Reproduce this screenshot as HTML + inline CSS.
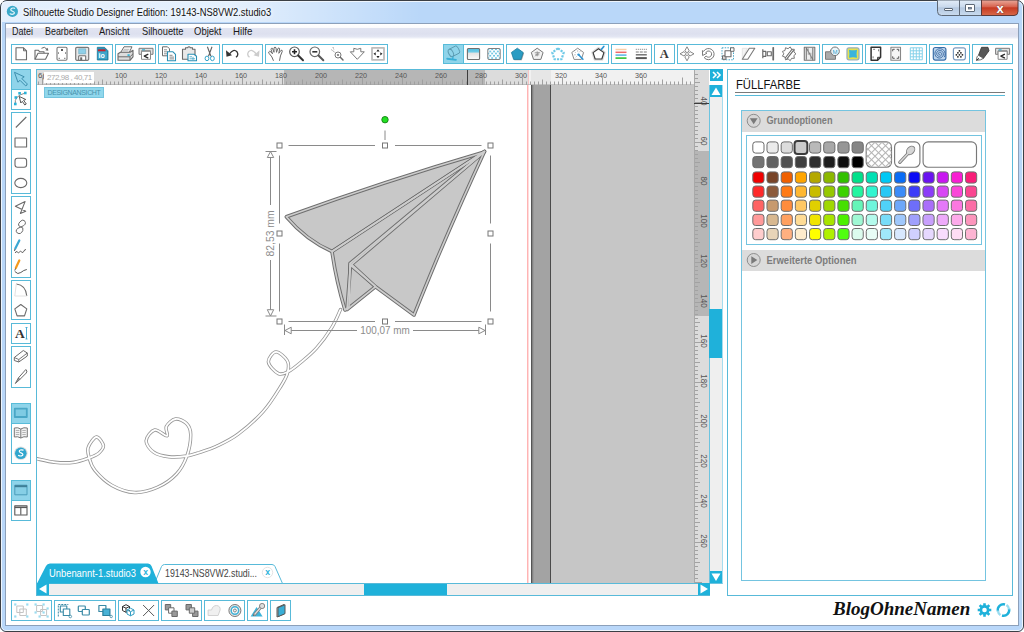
<!DOCTYPE html><html lang="de"><head><meta charset="utf-8"><title>Silhouette Studio Designer Edition</title><style>
*{box-sizing:border-box;margin:0;padding:0}
html,body{width:1024px;height:632px;overflow:hidden;background:#fff}
body{position:relative;font-family:"Liberation Sans",sans-serif;font-size:11px;color:#222}
.abs{position:absolute}
#win{position:absolute;left:0;top:0;width:1024px;height:632px;border:1px solid #3b3f45;border-radius:7px 7px 6px 6px;
 background:#b9d7f9;overflow:hidden}
#win:before{content:"";position:absolute;left:0;top:0;right:0;bottom:0;border:1px solid #eef5fd;border-radius:6px 6px 5px 5px}
#glow{position:absolute;left:2px;top:2px;width:420px;height:20px;background:linear-gradient(90deg,rgba(255,255,255,.62) 0,rgba(255,255,255,.62) 55%,rgba(255,255,255,0) 100%)}
#client{position:absolute;left:5px;top:23px;width:1014px;height:603px;background:#fff;border:1px solid #8ca0ba}
#menubar{position:absolute;left:6px;top:24px;width:1012px;height:15px;background:linear-gradient(180deg,#fff 0,#fbfbfd 3.5px,#e1e4f1 4.5px,#dde0ef 10px,#e4e7f3 13px,#f1f3f9 14px,#fbfbfd 15px)}
.mi{position:absolute;top:25px;font-size:10.500px;line-height:12px;color:#1a1a1a;white-space:nowrap;transform-origin:0 50%}
#title{position:absolute;left:23px;top:5.500px;font-size:10.500px;line-height:12px;transform:scaleX(.893);color:#111;white-space:nowrap;transform-origin:0 50%;text-shadow:0 0 6px #fff,0 0 6px #fff}
.tb{position:absolute;border:1px solid #58bad9;background:#fff}
.act{position:absolute;background:#8fd4ea;border:1px solid #58bcd9}
svg{position:absolute;overflow:visible}
</style></head><body>
<div id="win"></div><div id="glow"></div><div id="client"></div><div id="menubar"></div>
<svg style="left:5px;top:4px" width="16" height="16" viewBox="0 0 16 16"><circle cx="7.400" cy="7.400" r="5.600" fill="#3aa9c9"/><path d="M9.600 4.300c-2-.8-4 .1-3.800 1.500.2 1.500 3.500 1.300 3.600 3 .1 1.400-2.300 2-4.300 1" fill="none" stroke="#e8f6fb" stroke-width="1.200" stroke-linecap="round"/></svg>
<div id="title">Silhouette Studio Designer Edition: 19143-NS8VW2.studio3</div>
<svg style="left:937px;top:0" width="82" height="17" viewBox="0 0 82 17">
<defs><linearGradient id="gb" x1="0" y1="0" x2="0" y2="1"><stop offset="0" stop-color="#e3edf8"/><stop offset=".45" stop-color="#c9d9ec"/><stop offset=".5" stop-color="#b4c8e0"/><stop offset="1" stop-color="#c9dbee"/></linearGradient>
<linearGradient id="gr" x1="0" y1="0" x2="0" y2="1"><stop offset="0" stop-color="#e9a99b"/><stop offset=".45" stop-color="#d7614c"/><stop offset=".5" stop-color="#c63a22"/><stop offset="1" stop-color="#d8694a"/></linearGradient></defs>
<path d="M.5 0V11.5a4 4 0 0 0 4 4H22.5V0z" fill="url(#gb)" stroke="#5d6876"/>
<path d="M22.5 0V15.500H44.500V0z" fill="url(#gb)" stroke="#5d6876"/>
<path d="M44.500 0V15.500H77a4 4 0 0 0 4-4V0z" fill="url(#gr)" stroke="#5b3a3a"/>
<rect x="7.500" y="8.500" width="8" height="2" rx=".5" fill="#fff" stroke="#4d5968" stroke-width=".9"/>
<rect x="28.500" y="4.500" width="9" height="7" rx=".5" fill="#fff" stroke="#4d5968" stroke-width=".9"/><rect x="31.500" y="7.500" width="3" height="1.500" fill="#8fa2ba" stroke="#4d5968" stroke-width=".7"/>
<text x="63" y="12.500" text-anchor="middle" font-family="Liberation Sans,sans-serif" font-weight="bold" font-size="13" fill="#fff" stroke="#5b3a3a" stroke-width=".6" paint-order="stroke">x</text>
</svg>
<div class="mi" style="left:12px;transform:scaleX(0.857)">Datei</div>
<div class="mi" style="left:44.5px;transform:scaleX(0.847)">Bearbeiten</div>
<div class="mi" style="left:99px;transform:scaleX(0.892)">Ansicht</div>
<div class="mi" style="left:141.5px;transform:scaleX(0.887)">Silhouette</div>
<div class="mi" style="left:194px;transform:scaleX(0.906)">Objekt</div>
<div class="mi" style="left:232.5px;transform:scaleX(0.928)">Hilfe</div>
<div class="tb" style="left:11px;top:44px;width:102px;height:20px"></div>
<div class="tb" style="left:115px;top:44px;width:41px;height:20px"></div>
<div class="tb" style="left:158px;top:44px;width:62px;height:20px"></div>
<div class="tb" style="left:222px;top:44px;width:41px;height:20px"></div>
<div class="tb" style="left:265px;top:44px;width:123px;height:20px"></div>
<div class="tb" style="left:443px;top:44px;width:61px;height:20px"></div>
<div class="tb" style="left:506px;top:44px;width:103px;height:20px"></div>
<div class="tb" style="left:611px;top:44px;width:41px;height:20px"></div>
<div class="tb" style="left:654px;top:44px;width:21px;height:20px"></div>
<div class="tb" style="left:677px;top:44px;width:143px;height:20px"></div>
<div class="tb" style="left:822px;top:44px;width:41px;height:20px"></div>
<div class="tb" style="left:865px;top:44px;width:62px;height:20px"></div>
<div class="tb" style="left:929px;top:44px;width:41px;height:20px"></div>
<div class="tb" style="left:972px;top:44px;width:41px;height:20px"></div>
<div class="act" style="left:443px;top:44px;width:21px;height:20px"></div>
<div class="tb" style="left:11px;top:69px;width:20px;height:41px"></div>
<div class="tb" style="left:11px;top:112px;width:20px;height:82px"></div>
<div class="tb" style="left:11px;top:196px;width:20px;height:82px"></div>
<div class="tb" style="left:11px;top:280px;width:20px;height:40px"></div>
<div class="tb" style="left:11px;top:322.5px;width:20px;height:21.5px"></div>
<div class="tb" style="left:11px;top:346px;width:20px;height:41.5px"></div>
<div class="tb" style="left:11px;top:402.5px;width:20px;height:61.5px"></div>
<div class="tb" style="left:11px;top:480px;width:20px;height:41px"></div>
<div class="act" style="left:11px;top:69px;width:20px;height:21px"></div>
<div class="act" style="left:11px;top:402.5px;width:20px;height:21px"></div>
<div class="act" style="left:11px;top:480px;width:20px;height:21px"></div>
<div class="tb" style="left:11px;top:600px;width:41px;height:21px"></div>
<div class="tb" style="left:54px;top:600px;width:62px;height:21px"></div>
<div class="tb" style="left:118px;top:600px;width:41px;height:21px"></div>
<div class="tb" style="left:161px;top:600px;width:41px;height:21px"></div>
<div class="tb" style="left:204px;top:600px;width:41px;height:21px"></div>
<div class="tb" style="left:247px;top:600px;width:21px;height:21px"></div>
<div class="tb" style="left:270px;top:600px;width:21px;height:21px"></div>
<svg style="left:0;top:0" width="1024" height="632" viewBox="0 0 1024 632" font-family="Liberation Sans,sans-serif" fill="none" stroke-linejoin="round">
<defs><linearGradient id="gcy" x1="0" y1="0" x2="0" y2="1"><stop offset="0" stop-color="#4fbfe2"/><stop offset=".3" stop-color="#6ecae6"/><stop offset=".45" stop-color="#e4e4e4"/><stop offset="1" stop-color="#fafafa"/></linearGradient><pattern id="dots" width="3.800" height="4.400" patternUnits="userSpaceOnUse" patternTransform="translate(-6.600 -5.700)"><rect width="3.800" height="4.400" fill="#fff"/><circle cx=".950" cy="1.100" r=".95" fill="#4db8dc"/><circle cx="2.850" cy="3.300" r=".95" fill="#4db8dc"/></pattern></defs>
<g transform="translate(21 53.8)"><path d="M-5-6H2.500L5.500-3V6H-5z" fill="#fff" stroke="#6a6a6a" stroke-width="1.100"/><path d="M2.500-6V-3H5.500" stroke="#6a6a6a" stroke-width="1"/></g>
<g transform="translate(41.5 53.8)"><path d="M-6.500 5.500V-3.500H-3L-2-2H2.500V-.500" stroke="#6a6a6a" stroke-width="1.100"/><path d="M-6.500 5.500L-3.500-.500H7L4 5.500z" fill="#fff" stroke="#6a6a6a" stroke-width="1.100"/><path d="M0-5.500Q3-8 5.500-4.500" stroke="#6a6a6a" stroke-width="1"/><path d="M6.800-3L3.800-3.500L6.300-6z" fill="#6a6a6a"/></g>
<g transform="translate(62 53.8)"><rect x="-5" y="-6.500" width="10" height="13" rx="1.200" fill="#fff" stroke="#777" stroke-width="1.100"/><rect x="-1" y="-4.800" width="2" height="2" fill="#585858"/><path d="M-3.500-1.500v1.500M3.500-1.500v1.500M-3.500 4.500h1.500M3.500 4.500h-1.500" stroke="#7a7a7a" stroke-width="1"/></g>
<g transform="translate(82.2 53.8)"><rect x="-6.500" y="-6.500" width="13" height="13" rx="1.200" fill="#e8e8e8" stroke="#7a7a7a" stroke-width="1.200"/><rect x="-3.500" y="-5" width="7" height="5" fill="#8fd0e8" stroke="#6aa8c0" stroke-width=".6"/><rect x="-3.500" y="2" width="7" height="4.500" fill="#fff" stroke="#6a6a6a" stroke-width="1"/><rect x="-2" y="3.500" width="2" height="3" fill="#6a6a6a"/></g>
<g transform="translate(102.5 53.8)"><path d="M-5.200-6.500H2L5.500-3V6.200H-5.200z" fill="#2b93b8" stroke="#1f7896" stroke-width=".8"/><rect x="-4.500" y="-4.500" width="7.500" height="2.200" fill="#c8202c"/><rect x="-4.500" y="-2.300" width="9" height="7.500" fill="#3fa6cb"/><text x="-4" y="4.300" font-size="7" font-weight="bold" fill="#fff" stroke="none">io</text></g>
<g transform="translate(125.5 53.8)"><path d="M-5-1L-1.500-7H6.500L3.500-1z" fill="#fff" stroke="#6a6a6a" stroke-width="1"/><path d="M-2-4.500H4M-3-3H3" stroke="#999" stroke-width=".7"/><path d="M-7.500 0L-5-1.500H4.500L7.500-3.500V3L4.500 6.500H-7.500z" fill="#ddd" stroke="#6a6a6a" stroke-width="1.100"/><path d="M-7.500 3H4.500L7.500 0M4.500 3V6.500" stroke="#6a6a6a" stroke-width="1"/><rect x="2" y=".500" width="2.200" height="1.600" fill="#29b1d8"/></g>
<g transform="translate(146 53.8)"><path d="M-7-5.500H7V.500H4.500V-3H-4.500V.500H-7z" fill="#e2e2e2" stroke="#7a7a7a" stroke-width="1"/><path d="M-4.500-2.500H4.500V5.500H-4.500z" fill="#fff" stroke="#8a8a8a" stroke-width="1"/><path d="M2.300 .300L-1.800 2.300L2.300 4.300" stroke="#2a2a2a" stroke-width="1.200"/><path d="M-4-4h3" stroke="#29b1d8" stroke-width="1"/></g>
<g transform="translate(169 53.8)"><path d="M-6.500-7H-1.500L.500-5V2H-6.500z" fill="#fff" stroke="#6a6a6a" stroke-width="1"/><path d="M-5-4h3M-5-2h4M-5 0h4" stroke="#777" stroke-width=".8"/><path d="M-1.500-2H4L6.500 .500V7H-1.500z" fill="#fff" stroke="#2a8fb4" stroke-width="1.100"/><path d="M.500 1.500h3M.500 3.300h4.500M.500 5.100h4.500" stroke="#6a6a6a" stroke-width=".8"/></g>
<g transform="translate(189 53.8)"><path d="M-6.500-4.500H-3.500V-6H-1.500Q0-8 1.500-6H3.500V-4.500H6V5.500H-6.500z" fill="#e8e8e8" stroke="#6a6a6a" stroke-width="1.100"/><path d="M-1 .500H5L7.500 2.500V7H-1z" fill="#fff" stroke="#2a8fb4" stroke-width="1.100"/><path d="M.500 3h2.500M.500 5h5.500M4 3v3" stroke="#4aa8c8" stroke-width=".9"/></g>
<g transform="translate(209.7 53.8)"><path d="M-2.300-7L1.200 2.500M2.300-7L-1.200 2.500" stroke="#606060" stroke-width="1.100"/><ellipse cx="-2.700" cy="4.600" rx="1.900" ry="2.300" stroke="#35a4ca" stroke-width="1"/><ellipse cx="2.700" cy="4.600" rx="1.900" ry="2.300" stroke="#35a4ca" stroke-width="1"/></g>
<g transform="translate(232.5 53.8)"><path d="M-3 0Q1-5.500 4.500-2Q6.500 1 3.500 3.500" stroke="#333" stroke-width="1.300"/><path d="M-6.500-3.500L-6 3L-.500 1.500z" fill="#333"/></g>
<g transform="translate(253 53.8)"><path d="M3 0Q-1-5.500-4.500-2Q-6.500 1-3.500 3.500" stroke="#ccc" stroke-width="1.300"/><path d="M6.500-3.500L6 3L.500 1.500z" fill="#ccc"/></g>
<g transform="translate(275.5 53.8)"><path d="M-2 7Q-3 3-6.500-.500Q-7.500-2-6-2.500Q-4.500-2.500-3 0L-4.500-4.500Q-4.500-6-3-5.500L-1.500-1.500L-1.500-6Q-.500-7.500 .500-6L1-1.500L2.500-5.500Q3.800-6.500 4.200-5L3.300-.500L5.500-3.500Q7-4 6.800-2.500Q4.500 2 4 7" fill="#fff" stroke="#6a6a6a" stroke-width="1"/></g>
<g transform="translate(297 53.8)"><circle cx="-2.500" cy="-2" r="4.800" fill="#fff" stroke="#585858" stroke-width="1.200"/><path d="M1.200 1.700L6 6.500" stroke="#333" stroke-width="2" stroke-linecap="round"/><path d="M-5-2h5M-2.500-4.500v5" stroke="#222" stroke-width="1.600"/></g>
<g transform="translate(317.3 53.8)"><circle cx="-2.500" cy="-2" r="4.800" fill="#fff" stroke="#6a6a6a" stroke-width="1.200"/><path d="M1.200 1.700L6 6.500" stroke="#585858" stroke-width="2" stroke-linecap="round"/><path d="M-5-2h5" stroke="#333" stroke-width="1.600"/></g>
<g transform="translate(337.5 53.8)"><circle cx=".500" cy="1.200" r="3" fill="#fff" stroke="#7a7a7a" stroke-width="1"/><circle cx=".500" cy="1.200" r="1.100" fill="#7a7a7a"/><path d="M2.800 3.500L5.500 6.200" stroke="#6a6a6a" stroke-width="1.500" stroke-linecap="round"/><path d="M-6-4L-2-1M-4.500-6.500L-3.500-4" stroke="#7a7a7a" stroke-width="1" stroke-dasharray="1.200 1.200"/></g>
<g transform="translate(357.3 53.8)"><path d="M-3.500-5.500Q0-3.500 3.500-5.500V-2H7L0 5.500L-7-2H-3.500z" fill="#fff" stroke="#7a7a7a" stroke-width="1"/></g>
<g transform="translate(378 53.8)"><rect x="-6" y="-6" width="12" height="12" fill="#fff" stroke="#bdbdbd" stroke-width="1.800"/><path d="M0-4.500L1.600-2.300H-1.600zM0 4.500L1.600 2.300H-1.600zM-4.500 0L-2.300-1.600V1.600zM4.500 0L2.300-1.600V1.600z" fill="#222"/></g>
<g transform="translate(453.3 53.8)"><g stroke="#5c9cb2" stroke-width="1"><ellipse cx="-2.400" cy="-.900" rx="2.200" ry="4" transform="rotate(-27.300 -2.400 -.900)"/><path d="M-4.230-4.460L2.370-7.860A1.300 4-27.300 0 1 6.030-.740L-.570 2.660"/></g><path d="M-6.100 4.900L2.600 6.100" stroke="#3aafd6" stroke-width="1.900" stroke-linecap="round"/><path d="M-.300 2.900L-.600 5.200" stroke="#3aafd6" stroke-width="1.300"/></g>
<g transform="translate(473.6 53.8)"><rect x="-6.200" y="-5.300" width="12.200" height="11" rx="1" fill="url(#gcy)" stroke="#707070" stroke-width="1.100"/></g>
<g transform="translate(494 53.8)"><rect x="-6.200" y="-5.300" width="12.400" height="11" rx="1" fill="url(#dots)" stroke="#808080" stroke-width="1"/></g>
<g transform="translate(517.3 53.8)"><path d="M0.00 -5.70L5.99 -1.35L3.70 5.70L-3.70 5.70L-5.99 -1.35z" transform="translate(.8 .8)" fill="#777" opacity=".7"/><path d="M0.00 -5.60L5.90 -1.32L3.64 5.62L-3.64 5.62L-5.90 -1.32z" fill="#2a9cc3" stroke="#1f7fa0" stroke-width=".8"/></g>
<g transform="translate(537.2 53.8)"><path d="M0.00 -5.60L5.90 -1.32L3.64 5.62L-3.64 5.62L-5.90 -1.32z" fill="#f2f2f2" stroke="#777" stroke-width="1"/><path d="M-2.500-1h5M-2 1h4M0-2.500v5M-2 2.500l4-4" stroke="#888" stroke-width=".8"/></g>
<g transform="translate(558 53.8)"><path d="M0.00 -5.40L5.71 -1.25L3.53 5.45L-3.53 5.45L-5.71 -1.25z" fill="#fff" stroke="#6cc8e6" stroke-width="2.200" stroke-dasharray="2.200 1.100"/></g>
<g transform="translate(577.7 53.8)"><path d="M0.00 -5.60L5.90 -1.32L3.64 5.62L-3.64 5.62L-5.90 -1.32z" fill="#fff" stroke="#8a8a8a" stroke-width="1"/><path d="M-3-2l1 1M0-3.500v1.500M-3.500 1h1.500M-2 3.500l1-1M2.500-2.500l-1 1" stroke="#aaa" stroke-width=".8"/><path d="M1 1L5.200 5.400" stroke="#2f95d4" stroke-width="1.600" stroke-linecap="round"/><circle cx=".800" cy=".800" r="1.200" fill="#2f95d4"/></g>
<g transform="translate(598.5 53.8)"><path d="M0.00 -5.90L6.18 -1.41L3.82 5.86L-3.82 5.86L-6.18 -1.41z" fill="none" stroke="#dedede" stroke-width="2.200"/><path d="M0.00 -5.10L5.42 -1.16L3.35 5.21L-3.35 5.21L-5.42 -1.16z" fill="#fff" stroke="#3a3a3a" stroke-width="1.150"/><path d="M3-4.500L5.300-7.300" stroke="#2f95d4" stroke-width="1.700" stroke-linecap="round"/></g>
<g transform="translate(621 53.8)"><path d="M-5.500-4.300h11" stroke="#f8cfa8" stroke-width="1.500"/><path d="M-5.500-1.500h11" stroke="#f06a6a" stroke-width="1.500"/><path d="M-5.500 1.300h11" stroke="#5ab4e4" stroke-width="1.500"/><path d="M-5.500 4.300h11" stroke="#3cc43c" stroke-width="1.700"/></g>
<g transform="translate(641.3 53.8)"><path d="M-5.500-4.500h11" stroke="#777" stroke-width="1" stroke-dasharray="1 1"/><path d="M-5.500-1.800h11" stroke="#7a7a7a" stroke-width="1.200" stroke-dasharray="3 1"/><path d="M-5.500 1h11" stroke="#6a6a6a" stroke-width="1.400"/><path d="M-5.500 4.300h11" stroke="#585858" stroke-width="2"/></g>
<text x="664.300" y="58.300" font-family="Liberation Serif,serif" font-weight="bold" font-size="12.500" text-anchor="middle" fill="#3a3a3a" stroke="none">A</text>
<g transform="translate(687 53.8)"><path d="M0-7L2.200-3L0-1L-2.200-3zM0 7L2.200 3L0 1L-2.200 3zM-7 0L-3-2.200L-1 0L-3 2.200zM7 0L3-2.200L1 0L3 2.200z" fill="#fff" stroke="#7a7a7a" stroke-width=".9"/></g>
<g transform="translate(707.5 53.8)"><path d="M-5.060-3.200L-3.850-2.500A5.600 5.600 0 1 1-3.290 3.900L-1.370 2.290A3.100 3.100 0 1 0-1.680-1.250L-.560-.600L-4.900 1.740z" fill="#fff" stroke="#7a7a7a" stroke-width="1"/></g>
<g transform="translate(728 53.8)"><rect x="-6" y="-6" width="11.500" height="12" stroke="#4aa8c8" stroke-width="1" stroke-dasharray="1.500 1.200"/><rect x="-5.500" y="2" width="3.500" height="3.500" fill="#ddd" stroke="#6a6a6a" stroke-width="1"/><rect x="-3" y="-3" width="6" height="6" fill="#fff" stroke="#6a6a6a" stroke-width="1.100"/><rect x="2.500" y="-6" width="3.500" height="3.500" fill="#fff" stroke="#6a6a6a" stroke-width="1"/></g>
<g transform="translate(748.3 53.8)"><path d="M-6-5.500H-1L-6 5.500z" fill="#f4f4f4" stroke="#e0e0e0" stroke-width=".8"/><path d="M-6 5.500L1-5.500H6.500L-.500 5.500z" fill="#fff" stroke="#7a7a7a" stroke-width="1.100"/></g>
<g transform="translate(768.3 53.8)"><path d="M-5.500-4.500v9M-5.500-2.500h3v5h-3M5-6.500v13" stroke="#6a6a6a" stroke-width="1.200"/><rect x="-1" y="-2" width="4" height="4" fill="#fff" stroke="#6a6a6a" stroke-width="1.100"/><path d="M5-6.500v13" stroke="#6a6a6a" stroke-width="1.600"/></g>
<g transform="translate(789 53.8)"><path d="M7.00 0.00L4.89 1.78L5.36 4.50L2.60 4.50L1.22 6.89L-0.90 5.12L-3.50 6.06L-3.98 3.34L-6.58 2.39L-5.20 0.00L-6.58 -2.39L-3.98 -3.34L-3.50 -6.06L-0.90 -5.12L1.22 -6.89L2.60 -4.50L5.36 -4.50L4.89 -1.78z" fill="#fff" stroke="#7a7a7a" stroke-width="1"/><path d="M-3.800 4.200L3.200-4.800M-2.300 5.300L4.700-3.700" stroke="#6a6a6a" stroke-width="1.100"/></g>
<g transform="translate(809.3 53.8)"><rect x="-5" y="-6.500" width="10.500" height="13" fill="#eee" stroke="#777" stroke-width="1.100"/><path d="M-3 6V-6L3.500 6V-6" stroke="#7a7a7a" stroke-width="1.100"/><path d="M-1-5.500V1M1.500 5.500V-1" stroke="#999" stroke-width=".9"/></g>
<g transform="translate(832.5 53.8)"><path d="M-7 5.500V-2H-3L-1-4.500H3V5.500z" fill="#aaa" stroke="#7a7a7a" stroke-width="1"/><circle cx="2.500" cy="-2.500" r="4.300" fill="#eaf6fb" stroke="#777" stroke-width="1"/><text x="2.500" y="-.300" font-size="6" text-anchor="middle" fill="#3aa0c8" stroke="none">M</text></g>
<g transform="translate(853 53.8)"><rect x="-6" y="-6" width="12" height="12" rx="2" fill="#e6e24e" stroke="#9ab0bc" stroke-width="1.300"/><path d="M-4-4Q0-3 4-4Q3.200 0 4 4Q0 3-4 4Q-3.200 0-4-4z" fill="#39b4dc"/></g>
<g transform="translate(875.6 53.8)"><path d="M-4.500-6.500H5V3.500L2 6.500H-4.500z" fill="#fff" stroke="#333" stroke-width="1.500"/><path d="M5 3.500H2V6.500" stroke="#333" stroke-width="1"/><path d="M-2.500-4.500h2M3-4.500v2M-2.500 4.500v-2" stroke="#6a6a6a" stroke-width=".9"/></g>
<g transform="translate(895.7 53.8)"><rect x="-4.800" y="-6.500" width="9.600" height="13" fill="#f6f6f6" stroke="#888" stroke-width="1.100"/><path d="M-3-2.500V-4.500H-1M3-2.500V-4.500H1M-3 2.500V4.500H-1M3 2.500V4.500H1" stroke="#585858" stroke-width="1"/></g>
<g transform="translate(916.3 53.8)"><path d="M-6 -6v12M-3 -6v12M0 -6v12M3 -6v12M6 -6v12M-6 -6h12M-6 -3h12M-6 0h12M-6 3h12M-6 6h12" stroke="#86d2ea" stroke-width="1"/></g>
<g transform="translate(939.6 53.8)"><rect x="-6.300" y="-6.300" width="12.600" height="12.600" rx="2" fill="#bcd4ec" stroke="#3a6ea8" stroke-width="1.200"/><path d="M0.30 0.00L0.37 0.13L0.38 0.30L0.32 0.48L0.17 0.65L-0.06 0.76L-0.34 0.78L-0.64 0.70L-0.91 0.50L-1.11 0.19L-1.20 -0.19L-1.16 -0.62L-0.96 -1.03L-0.61 -1.36L-0.15 -1.58L0.40 -1.63L0.95 -1.49L1.46 -1.16L1.84 -0.66L2.05 -0.03L2.03 0.67L1.78 1.35L1.30 1.93L0.63 2.33L-0.17 2.50L-1.00 2.40L-1.79 2.01L-2.42 1.37L-2.83 0.53L-2.94 -0.43L-2.72 -1.40L-2.18 -2.27L-1.37 -2.94L-0.35 -3.32L0.76 -3.34L1.85 -2.99L2.79 -2.29L3.47 -1.29L3.79 -0.10L3.71 1.16L3.21 2.36L2.32 3.34L1.14 4.01L-0.22 4.25L-1.62 4.03L-2.90 3.36L-3.91 2.28L-4.53 0.91L-4.67 -0.62L-4.30 -2.14L-3.44 -3.49L-2.17 -4.50L-0.60 -5.05L1.09 -5.06L2.71 -4.52L4.10 -3.45L5.08 -1.97L5.54 -0.22L5.40 1.61L4.66 3.33" stroke="#2a5a98" stroke-width=".8"/></g>
<g transform="translate(959.4 53.8)"><rect x="-6" y="-6" width="12" height="12" rx="2" fill="#fff" stroke="#7a9ac0" stroke-width="1.200"/><g fill="#222"><circle cx="0" cy="-3" r=".9"/><circle cx="-1.5" cy="-1" r=".9"/><circle cx="1.5" cy="-1" r=".9"/><circle cx="-3" cy="1" r=".9"/><circle cx="0" cy="1" r=".9"/><circle cx="3" cy="1" r=".9"/><circle cx="-1.5" cy="3" r=".9"/><circle cx="1.5" cy="3" r=".9"/></g></g>
<g transform="translate(982.5 53.8)"><path d="M-1-6.500L5.500-6.500L6.500-3L1 4.500L-4 1.500z" fill="#585858" stroke="#333" stroke-width=".8"/><path d="M-4 1.500L1 4.500L-2 6L-6 6.500L-5.500 3z" fill="#fff" stroke="#585858" stroke-width=".9"/><path d="M-6 6.500L-3.500 4.500" stroke="#333" stroke-width="1"/></g>
<g transform="translate(1002.6 53.8)"><path d="M-7-5.500H7V.500H4.500V-3H-4.500V.500H-7z" fill="#e2e2e2" stroke="#7a7a7a" stroke-width="1"/><path d="M-4.500-2.500H4.500V5.500H-4.500z" fill="#fff" stroke="#8a8a8a" stroke-width="1"/><path d="M2.300 .300L-1.800 2.300L2.300 4.300" stroke="#2a2a2a" stroke-width="1.200"/><path d="M-4-4h3" stroke="#29b1d8" stroke-width="1"/></g>
<g transform="translate(20.8 79)"><path d="M-6.300-6.700L3.400-2.200L1-.500L6.300 4.800Q6.800 6.500 4.700 6.800L-.800 1.300L-2.900 3.200z" fill="none" stroke="#3d8fae" stroke-width="1"/></g>
<g transform="translate(20.8 99)"><path d="M-5.500 5Q-7-3 4.500-6" stroke="#7a7a7a" stroke-width=".9"/><path d="M-1.500-2.500L5 .500L2.800 1.300L5.500 5L4 6L1.500 2.300L0 4z" fill="#fff" stroke="#585858" stroke-width="1"/><g fill="#29b1d8"><rect x="-6.800" y="3.700" width="2.600" height="2.600"/><rect x="-6.300" y="-2.800" width="2.600" height="2.600"/><rect x="-2.500" y="-7" width="2.600" height="2.600"/><rect x="3.200" y="-7.300" width="2.600" height="2.600"/></g></g>
<g transform="translate(20.8 122)"><path d="M-5 5.500L5.500-5" stroke="#6a6a6a" stroke-width="1.100"/></g>
<g transform="translate(20.8 142.5)"><rect x="-5.800" y="-4.500" width="11.600" height="9" fill="#fff" stroke="#6a6a6a" stroke-width="1.100"/></g>
<g transform="translate(20.8 162.7)"><rect x="-5.800" y="-4.500" width="11.600" height="9" rx="2.500" fill="#fff" stroke="#6a6a6a" stroke-width="1.100"/></g>
<g transform="translate(20.8 183)"><ellipse rx="6" ry="4.600" fill="#fff" stroke="#6a6a6a" stroke-width="1.100"/></g>
<g transform="translate(20.8 207)"><path d="M-5.500 0L3.500-6L.500 6.500L5.500 3.500z" transform="rotate(8)" fill="none" stroke="#6a6a6a" stroke-width="1"/></g>
<g transform="translate(20.8 227)"><path d="M3.500-6.500Q7-2.500 0 0Q-7 2.500-3.500 6Q0 8 2 3.500Q3 0 0 0Q-4-1.500-1-5Q1.500-8 3.500-6.500z" fill="none" stroke="#6a6a6a" stroke-width="1"/></g>
<g transform="translate(20.8 247)"><path d="M-5.500 6q.8-2.500 2-1t2.200 0t2.200 0t2.200-.8t2-1.500" stroke="#585858" stroke-width="1"/><path d="M-1.500-6.500L-5.500 1.500" stroke="#3aa6d2" stroke-width="2.200" stroke-linecap="round"/><path d="M-5.800 2L-6.300 4" stroke="#585858" stroke-width="1"/></g>
<g transform="translate(20.8 267)"><path d="M-6 4.500Q-3 8 0 5.500T6 2.500" stroke="#585858" stroke-width="1"/><path d="M-1.500-6.500L-5 1" stroke="#f39a1e" stroke-width="2.200" stroke-linecap="round"/><path d="M-5.300 1.500L-6 3.500" stroke="#585858" stroke-width="1"/></g>
<g transform="translate(20.8 290)"><path d="M-4.500-6Q5-5 6 6" stroke="#6a6a6a" stroke-width="1.100"/><path d="M-4.500-6L-6 6H6" stroke="#e2e2e2" stroke-width="1"/></g>
<g transform="translate(20.8 310.3)"><path d="M0.00 -5.80L5.99 -1.45L3.70 5.60L-3.70 5.60L-5.99 -1.45z" fill="#fff" stroke="#6a6a6a" stroke-width="1.100"/></g>
<text x="19.800" y="338" font-family="Liberation Serif,serif" font-weight="bold" font-size="13.500" text-anchor="middle" fill="#333" stroke="none">A</text><path d="M26.500 327.500V339M25.500 327.500h2M25.500 339h2" stroke="#3aa6d2" stroke-width=".9"/>
<g transform="translate(20.8 356)"><path d="M-6.500 1.500L2.500-5.500L6.500-3L6.500 0L-2 6L-6.500 4.500z" fill="#fff" stroke="#6a6a6a" stroke-width="1"/><path d="M-6.500 1.500L-2 3.500L6.500-3M-2 3.500V6" stroke="#6a6a6a" stroke-width=".9"/></g>
<g transform="translate(20.8 376)"><path d="M5-6.500Q7-5 5.500-3L-1 3.500L-2.500 2z" fill="#fff" stroke="#6a6a6a" stroke-width="1"/><path d="M-2.500 2L-1 3.500L-5.500 7.500z" fill="#999" stroke="#6a6a6a" stroke-width=".9"/></g>
<g transform="translate(20.8 412.8)"><rect x="-6" y="-4.200" width="12" height="8.400" fill="#7fcbe3" stroke="#4aa7c6" stroke-width="1.800"/></g>
<g transform="translate(20.8 433)"><path d="M0-4Q-3-6-6.500-5V4Q-3 3 0 5Q3 3 6.500 4V-5Q3-6 0-4z" fill="#f1f1f1" stroke="#777" stroke-width="1"/><path d="M0-4V5" stroke="#777" stroke-width="1"/><path d="M-5-2.500h3.500M-5-.500h3.500M-5 1.500h3.500M1.500-2.500H5M1.500-.500H5M1.500 1.500H5" stroke="#999" stroke-width=".7"/></g>
<g transform="translate(20.8 453.3)"><circle r="6.800" fill="#e0e0e0"/><circle r="5.800" fill="#31a6ce"/><path d="M2.300-3.200c-2-.8-4 .1-3.800 1.400.2 1.500 3.500 1.300 3.600 3 .1 1.400-2.300 2-4.300 1" fill="none" stroke="#fff" stroke-width="1.200" stroke-linecap="round"/></g>
<g transform="translate(20.8 490)"><rect x="-6" y="-4.800" width="12.200" height="9.600" fill="#86cfe6" stroke="#4a9cba" stroke-width="1"/><rect x="-6" y="-4.800" width="12.200" height="2" fill="#3f7f98"/></g>
<g transform="translate(20.8 510.3)"><rect x="-6" y="-4.500" width="12.200" height="9.200" fill="#fff" stroke="#585858" stroke-width="1.100"/><path d="M-6-3h12.200" stroke="#585858" stroke-width="1.600"/><path d="M0-3v7.500" stroke="#585858" stroke-width="1.100"/></g>
<g transform="translate(21.3 610.5)"><rect x="-4.500" y="-4.500" width="6.500" height="6.500" stroke="#c4c4c4" stroke-width="1"/><rect x="-1.500" y="-1.500" width="6.500" height="6.500" stroke="#c4c4c4" stroke-width="1"/><rect x="-7.1" y="-7.1" width="2.200" height="2.200" fill="#9bdcf0"/><rect x="4.9" y="-7.1" width="2.200" height="2.200" fill="#9bdcf0"/><rect x="-7.1" y="4.9" width="2.200" height="2.200" fill="#9bdcf0"/><rect x="4.9" y="4.9" width="2.200" height="2.200" fill="#9bdcf0"/></g>
<g transform="translate(41.6 610.5)"><rect x="-5" y="-5" width="6" height="6" stroke="#c4c4c4" stroke-width="1"/><rect x="-1" y="-1" width="6" height="6" stroke="#c4c4c4" stroke-width="1"/><rect x="-7.1" y="-7.1" width="2.200" height="2.200" fill="#9bdcf0"/><rect x="0.8999999999999999" y="-7.1" width="2.200" height="2.200" fill="#9bdcf0"/><rect x="-7.1" y="0.8999999999999999" width="2.200" height="2.200" fill="#9bdcf0"/><rect x="4.9" y="-3.1" width="2.200" height="2.200" fill="#9bdcf0"/><rect x="-3.1" y="4.9" width="2.200" height="2.200" fill="#9bdcf0"/><rect x="4.9" y="4.9" width="2.200" height="2.200" fill="#9bdcf0"/><rect x="0.8999999999999999" y="0.8999999999999999" width="2.200" height="2.200" fill="#9bdcf0"/></g>
<g transform="translate(64.3 610.5)"><path d="M-6 6V-6H4" stroke="#3a8aa6" stroke-width="1" stroke-dasharray="2 1"/><rect x="-4" y="-4.500" width="6.500" height="6" fill="#fff" stroke="#3a8aa6" stroke-width="1.100"/><rect x="-1" y="-1.500" width="6.500" height="6.500" fill="#fff" stroke="#3a8aa6" stroke-width="1.100"/><circle cx="6" cy="6" r="1.300" stroke="#3a8aa6" stroke-width=".8"/></g>
<g transform="translate(83.8 610.5)"><rect x="-5.500" y="-4.500" width="7" height="5.500" rx=".8" fill="#fff" stroke="#3a8aa6" stroke-width="1.200"/><rect x="-1.500" y="-1" width="7" height="5.500" rx=".8" fill="#fff" stroke="#3a8aa6" stroke-width="1.200"/></g>
<g transform="translate(104.9 610.5)"><rect x="-6" y="-5" width="7" height="6" fill="#fff" stroke="#3a8aa6" stroke-width="1.200"/><rect x="-2" y="-1.500" width="7" height="6.500" fill="#49b2d6" stroke="#2a7f9c" stroke-width="1.200"/><circle cx="6.300" cy="6" r="1.200" stroke="#3a8aa6" stroke-width=".8"/></g>
<g transform="translate(126 608.5)"><path d="M0-3.800L3.500-2V2L0 3.800L-3.500 2V-2zM-3.500-2L0-.300L3.500-2M0-.300V3.800" fill="#fff" stroke="#333" stroke-width="1"/></g><g transform="translate(130.5 612.0)"><path d="M0-3.800L3.500-2V2L0 3.800L-3.500 2V-2zM-3.500-2L0-.300L3.500-2M0-.300V3.800" fill="#fff" stroke="#2f9cc2" stroke-width="1"/></g>
<g transform="translate(148.6 610.5)"><path d="M-5.500-5.500Q0 0 5.500 5.500M5.500-5.500Q0 0-5.500 5.500" stroke="#585858" stroke-width="1"/></g>
<g transform="translate(171.3 610.5)"><rect x="-6" y="-6" width="5.400" height="5.400" fill="#999" stroke="#6a6a6a" stroke-width="1"/><rect x="-2.7" y="-2.7" width="5.400" height="5.400" fill="#fff" stroke="#6a6a6a" stroke-width="1"/><rect x="0.6" y="0.6" width="5.400" height="5.400" fill="#999" stroke="#6a6a6a" stroke-width="1"/></g>
<g transform="translate(192 610.5)"><rect x="-6" y="-6" width="5.400" height="5.400" fill="#999" stroke="#6a6a6a" stroke-width="1"/><rect x="0.6" y="0.6" width="5.400" height="5.400" fill="#999" stroke="#6a6a6a" stroke-width="1"/><rect x="-2.7" y="-2.7" width="5.400" height="5.400" fill="#ccc" stroke="#6a6a6a" stroke-width="1"/></g>
<g transform="translate(214.6 610.5)"><path d="M-6.500 5V-.500H-3Q-2-5 2-5Q6-4.500 5.500-.500L3.500 5z" fill="#f0f0f0" stroke="#d2d2d2" stroke-width="1"/></g>
<g transform="translate(234.9 610.5)"><circle r="6" fill="#e6e6e6" stroke="#777" stroke-width="1"/><circle r="3.700" fill="#fff" stroke="#3fb0d6" stroke-width="1.500"/><circle r="1.500" fill="#eee" stroke="#777" stroke-width=".9"/></g>
<g transform="translate(257.6 610.5)"><path d="M-7 6L-1-3.500L5 6z" fill="#3db4da"/><path d="M-3 4L3-3" stroke="#7a7a7a" stroke-width="2.800" stroke-linecap="round"/><path d="M-3 4L3-3" stroke="#ddd" stroke-width="1.300" stroke-linecap="round"/><circle cx="4.500" cy="-4.500" r="2.600" fill="#ddd" stroke="#7a7a7a" stroke-width=".9"/><path d="M-4.500 5.500L-3 4" stroke="#6a6a6a" stroke-width="1"/></g>
<g transform="translate(281 610.5)"><path d="M-4-3L3-6V3.500L-4 6.500z" fill="#ddd" stroke="#585858" stroke-width="1"/><path d="M-2.500-2L4.500-5V4L-2.500 7z" transform="translate(-.500 -.800)" fill="#3aaed6" stroke="#585858" stroke-width="1"/></g>
</svg>
<div class="abs" style="left:36px;top:69px;width:687px;height:1px;background:#58bad9"></div>
<div class="abs" style="left:36px;top:69px;width:1px;height:527px;background:#58bad9"></div>
<div class="abs" style="left:36px;top:595px;width:674px;height:1px;background:#58bad9"></div>
<div class="abs" style="left:527px;top:85px;width:2px;height:498px;background:#ffb4b4"></div>
<div class="abs" style="left:528px;top:85px;width:1px;height:498px;background:#ffdcdc"></div>
<div class="abs" style="left:531px;top:85px;width:20px;height:498px;background:#a3a3a3;border-left:1px solid #555;border-right:1px solid #4a4a4a"></div>
<div class="abs" style="left:532px;top:85px;width:2px;height:498px;background:linear-gradient(90deg,#777,#a3a3a3)"></div>
<div class="abs" style="left:551px;top:85px;width:143px;height:498px;background:#c6c6c6"></div>
<svg style="left:0;top:0" width="1024" height="632" viewBox="0 0 1024 632" font-family="Liberation Sans,sans-serif">
<rect x="37" y="70" width="491" height="15" fill="#dcdcdc"/>
<rect x="284" y="70" width="201" height="15" fill="#b6b6b6"/>
<rect x="528" y="70" width="166" height="15" fill="#f1f1f1"/>
<rect x="531" y="70" width="20" height="15" fill="#e6e6e6"/>
<rect x="528" y="70" width="1" height="15" fill="#f6c4c4"/>
<path d="M38.5 85v-3.5M42.5 85v-7.5M46.5 85v-3.5M50.5 85v-3.5M54.5 85v-3.5M58.5 85v-3.5M62.5 85v-5.5M66.5 85v-3.5M70.5 85v-3.5M74.5 85v-3.5M78.5 85v-3.5M82.5 85v-7.5M86.5 85v-3.5M90.5 85v-3.5M94.5 85v-3.5M98.5 85v-3.5M102.5 85v-5.5M106.5 85v-3.5M110.5 85v-3.5M114.5 85v-3.5M118.5 85v-3.5M122.5 85v-7.5M126.5 85v-3.5M130.5 85v-3.5M134.5 85v-3.5M138.5 85v-3.5M142.5 85v-5.5M146.5 85v-3.5M150.5 85v-3.5M154.5 85v-3.5M158.5 85v-3.5M162.5 85v-7.5M166.5 85v-3.5M170.5 85v-3.5M174.5 85v-3.5M178.5 85v-3.5M182.5 85v-5.5M186.5 85v-3.5M190.5 85v-3.5M194.5 85v-3.5M198.5 85v-3.5M202.5 85v-7.5M206.5 85v-3.5M210.5 85v-3.5M214.5 85v-3.5M218.5 85v-3.5M222.5 85v-5.5M226.5 85v-3.5M230.5 85v-3.5M234.5 85v-3.5M238.5 85v-3.5M242.5 85v-7.5M246.5 85v-3.5M250.5 85v-3.5M254.5 85v-3.5M258.5 85v-3.5M262.5 85v-5.5M266.5 85v-3.5M270.5 85v-3.5M274.5 85v-3.5M278.5 85v-3.5M282.5 85v-7.5M286.5 85v-3.5M290.5 85v-3.5M294.5 85v-3.5M298.5 85v-3.5M302.5 85v-5.5M306.5 85v-3.5M310.5 85v-3.5M314.5 85v-3.5M318.5 85v-3.5M322.5 85v-7.5M326.5 85v-3.5M330.5 85v-3.5M334.5 85v-3.5M338.5 85v-3.5M342.5 85v-5.5M346.5 85v-3.5M350.5 85v-3.5M354.5 85v-3.5M358.5 85v-3.5M362.5 85v-7.5M366.5 85v-3.5M370.5 85v-3.5M374.5 85v-3.5M378.5 85v-3.5M382.5 85v-5.5M386.5 85v-3.5M390.5 85v-3.5M394.5 85v-3.5M398.5 85v-3.5M402.5 85v-7.5M406.5 85v-3.5M410.5 85v-3.5M414.5 85v-3.5M418.5 85v-3.5M422.5 85v-5.5M426.5 85v-3.5M430.5 85v-3.5M434.5 85v-3.5M438.5 85v-3.5M442.5 85v-7.5M446.5 85v-3.5M450.5 85v-3.5M454.5 85v-3.5M458.5 85v-3.5M462.5 85v-5.5M466.5 85v-3.5M470.5 85v-3.5M474.5 85v-3.5M478.5 85v-3.5M482.5 85v-7.5M486.5 85v-3.5M490.5 85v-3.5M494.5 85v-3.5M498.5 85v-3.5M502.5 85v-5.5M506.5 85v-3.5M510.5 85v-3.5M514.5 85v-3.5M518.5 85v-3.5M522.5 85v-7.5M526.5 85v-3.5M530.5 85v-3.5M534.5 85v-3.5M538.5 85v-3.5M542.5 85v-5.5M546.5 85v-3.5M550.5 85v-3.5M554.5 85v-3.5M558.5 85v-3.5M562.5 85v-7.5M566.5 85v-3.5M570.5 85v-3.5M574.5 85v-3.5M578.5 85v-3.5M582.5 85v-5.5M586.5 85v-3.5M590.5 85v-3.5M594.5 85v-3.5M598.5 85v-3.5M602.5 85v-7.5M606.5 85v-3.5M610.5 85v-3.5M614.5 85v-3.5M618.5 85v-3.5M622.5 85v-5.5M626.5 85v-3.5M630.5 85v-3.5M634.5 85v-3.5M638.5 85v-3.5M642.5 85v-7.5M646.5 85v-3.5M650.5 85v-3.5M654.5 85v-3.5M658.5 85v-3.5M662.5 85v-5.5M666.5 85v-3.5M670.5 85v-3.5M674.5 85v-3.5M678.5 85v-3.5M682.5 85v-7.5M686.5 85v-3.5M690.5 85v-3.5" stroke="#a0a0a0" stroke-width="1" fill="none"/>
<rect x="37" y="84" width="657" height="1" fill="#a0a0a0" opacity=".55"/>
<text x="121" y="78.3" font-size="8" text-anchor="middle" fill="#555" textLength="12" lengthAdjust="spacingAndGlyphs">100</text>
<text x="161" y="78.3" font-size="8" text-anchor="middle" fill="#555" textLength="12" lengthAdjust="spacingAndGlyphs">120</text>
<text x="201" y="78.3" font-size="8" text-anchor="middle" fill="#555" textLength="12" lengthAdjust="spacingAndGlyphs">140</text>
<text x="241" y="78.3" font-size="8" text-anchor="middle" fill="#555" textLength="12" lengthAdjust="spacingAndGlyphs">160</text>
<text x="281" y="78.3" font-size="8" text-anchor="middle" fill="#555" textLength="12" lengthAdjust="spacingAndGlyphs">180</text>
<text x="321" y="78.3" font-size="8" text-anchor="middle" fill="#555" textLength="12" lengthAdjust="spacingAndGlyphs">200</text>
<text x="361" y="78.3" font-size="8" text-anchor="middle" fill="#555" textLength="12" lengthAdjust="spacingAndGlyphs">220</text>
<text x="401" y="78.3" font-size="8" text-anchor="middle" fill="#555" textLength="12" lengthAdjust="spacingAndGlyphs">240</text>
<text x="441" y="78.3" font-size="8" text-anchor="middle" fill="#555" textLength="12" lengthAdjust="spacingAndGlyphs">260</text>
<text x="481" y="78.3" font-size="8" text-anchor="middle" fill="#555" textLength="12" lengthAdjust="spacingAndGlyphs">280</text>
<text x="521" y="78.3" font-size="8" text-anchor="middle" fill="#555" textLength="12" lengthAdjust="spacingAndGlyphs">300</text>
<text x="561" y="78.3" font-size="8" text-anchor="middle" fill="#555" textLength="12" lengthAdjust="spacingAndGlyphs">320</text>
<text x="601" y="78.3" font-size="8" text-anchor="middle" fill="#555" textLength="12" lengthAdjust="spacingAndGlyphs">340</text>
<text x="641" y="78.3" font-size="8" text-anchor="middle" fill="#555" textLength="12" lengthAdjust="spacingAndGlyphs">360</text>
<text x="38" y="78.3" font-size="8" fill="#555">6(</text>
<rect x="467" y="70" width="1" height="15" fill="#3c3c3c"/>
<rect x="694" y="70" width="15" height="513" fill="#dcdcdc"/>
<rect x="694" y="151" width="15" height="165" fill="#b6b6b6"/>
<path d="M694.500 74.5h3.5M694.500 78.5h3.5M694.500 82.5h5.5M694.500 86.5h3.5M694.500 90.5h3.5M694.500 94.5h3.5M694.500 98.5h3.5M694.500 102.5h7.5M694.500 106.5h3.5M694.500 110.5h3.5M694.500 114.5h3.5M694.500 118.5h3.5M694.500 122.5h5.5M694.500 126.5h3.5M694.500 130.5h3.5M694.500 134.5h3.5M694.500 138.5h3.5M694.500 142.5h7.5M694.500 146.5h3.5M694.500 150.5h3.5M694.500 154.5h3.5M694.500 158.5h3.5M694.500 162.5h5.5M694.500 166.5h3.5M694.500 170.5h3.5M694.500 174.5h3.5M694.500 178.5h3.5M694.500 182.5h7.5M694.500 186.5h3.5M694.500 190.5h3.5M694.500 194.5h3.5M694.500 198.5h3.5M694.500 202.5h5.5M694.500 206.5h3.5M694.500 210.5h3.5M694.500 214.5h3.5M694.500 218.5h3.5M694.500 222.5h7.5M694.500 226.5h3.5M694.500 230.5h3.5M694.500 234.5h3.5M694.500 238.5h3.5M694.500 242.5h5.5M694.500 246.5h3.5M694.500 250.5h3.5M694.500 254.5h3.5M694.500 258.5h3.5M694.500 262.5h7.5M694.500 266.5h3.5M694.500 270.5h3.5M694.500 274.5h3.5M694.500 278.5h3.5M694.500 282.5h5.5M694.500 286.5h3.5M694.500 290.5h3.5M694.500 294.5h3.5M694.500 298.5h3.5M694.500 302.5h7.5M694.500 306.5h3.5M694.500 310.5h3.5M694.500 314.5h3.5M694.500 318.5h3.5M694.500 322.5h5.5M694.500 326.5h3.5M694.500 330.5h3.5M694.500 334.5h3.5M694.500 338.5h3.5M694.500 342.5h7.5M694.500 346.5h3.5M694.500 350.5h3.5M694.500 354.5h3.5M694.500 358.5h3.5M694.500 362.5h5.5M694.500 366.5h3.5M694.500 370.5h3.5M694.500 374.5h3.5M694.500 378.5h3.5M694.500 382.5h7.5M694.500 386.5h3.5M694.500 390.5h3.5M694.500 394.5h3.5M694.500 398.5h3.5M694.500 402.5h5.5M694.500 406.5h3.5M694.500 410.5h3.5M694.500 414.5h3.5M694.500 418.5h3.5M694.500 422.5h7.5M694.500 426.5h3.5M694.500 430.5h3.5M694.500 434.5h3.5M694.500 438.5h3.5M694.500 442.5h5.5M694.500 446.5h3.5M694.500 450.5h3.5M694.500 454.5h3.5M694.500 458.5h3.5M694.500 462.5h7.5M694.500 466.5h3.5M694.500 470.5h3.5M694.500 474.5h3.5M694.500 478.5h3.5M694.500 482.5h5.5M694.500 486.5h3.5M694.500 490.5h3.5M694.500 494.5h3.5M694.500 498.5h3.5M694.500 502.5h7.5M694.500 506.5h3.5M694.500 510.5h3.5M694.500 514.5h3.5M694.500 518.5h3.5M694.500 522.5h5.5M694.500 526.5h3.5M694.500 530.5h3.5M694.500 534.5h3.5M694.500 538.5h3.5M694.500 542.5h7.5M694.500 546.5h3.5M694.500 550.5h3.5M694.500 554.5h3.5M694.500 558.5h3.5M694.500 562.5h5.5M694.500 566.5h3.5M694.500 570.5h3.5M694.500 574.5h3.5M694.500 578.5h3.5M694.500 582.5h7.5" stroke="#a2a2a2" stroke-width="1" fill="none"/>
<rect x="694" y="70" width="1" height="513" fill="#a8a8a8"/>
<text transform="translate(701.200 101) rotate(90)" font-size="8.500" text-anchor="middle" fill="#555" textLength="9" lengthAdjust="spacingAndGlyphs">40</text>
<text transform="translate(701.200 141) rotate(90)" font-size="8.500" text-anchor="middle" fill="#555" textLength="9" lengthAdjust="spacingAndGlyphs">60</text>
<text transform="translate(701.200 181) rotate(90)" font-size="8.500" text-anchor="middle" fill="#555" textLength="9" lengthAdjust="spacingAndGlyphs">80</text>
<text transform="translate(701.200 221) rotate(90)" font-size="8.500" text-anchor="middle" fill="#555" textLength="13.5" lengthAdjust="spacingAndGlyphs">100</text>
<text transform="translate(701.200 261) rotate(90)" font-size="8.500" text-anchor="middle" fill="#555" textLength="13.5" lengthAdjust="spacingAndGlyphs">120</text>
<text transform="translate(701.200 301) rotate(90)" font-size="8.500" text-anchor="middle" fill="#555" textLength="13.5" lengthAdjust="spacingAndGlyphs">140</text>
<text transform="translate(701.200 341) rotate(90)" font-size="8.500" text-anchor="middle" fill="#555" textLength="13.5" lengthAdjust="spacingAndGlyphs">160</text>
<text transform="translate(701.200 381) rotate(90)" font-size="8.500" text-anchor="middle" fill="#555" textLength="13.5" lengthAdjust="spacingAndGlyphs">180</text>
<text transform="translate(701.200 421) rotate(90)" font-size="8.500" text-anchor="middle" fill="#555" textLength="13.5" lengthAdjust="spacingAndGlyphs">200</text>
<text transform="translate(701.200 461) rotate(90)" font-size="8.500" text-anchor="middle" fill="#555" textLength="13.5" lengthAdjust="spacingAndGlyphs">220</text>
<text transform="translate(701.200 501) rotate(90)" font-size="8.500" text-anchor="middle" fill="#555" textLength="13.5" lengthAdjust="spacingAndGlyphs">240</text>
<text transform="translate(701.200 541) rotate(90)" font-size="8.500" text-anchor="middle" fill="#555" textLength="13.5" lengthAdjust="spacingAndGlyphs">260</text>
<rect x="694" y="103" width="15" height="1" fill="#3c3c3c"/>
</svg>
<div class="abs" style="left:44px;top:72px;width:50px;height:11px;background:#fff;font-size:8px;line-height:11px;color:#aaa;white-space:nowrap;padding-left:3px;letter-spacing:-.45px">272,98 , 40,71</div>
<div class="abs" style="left:44px;top:87px;width:60px;height:11px;background:#90d7ec;border:1px solid #74c4de;font-size:7px;line-height:9px;color:#4792ad;white-space:nowrap;text-align:center;letter-spacing:-.35px">DESIGNANSICHT</div>
<svg style="left:0;top:0" width="1024" height="632" viewBox="0 0 1024 632" font-family="Liberation Sans,sans-serif">
<clipPath id="cv"><rect x="37" y="85" width="657" height="498"/></clipPath><g clip-path="url(#cv)">
<path d="M340.5 309.6C339.0 312.6 335.6 321.4 331.6 327.8C327.6 334.2 321.6 342.4 316.5 348.1C311.4 353.8 305.9 358.1 301.3 362.0C296.7 365.9 292.4 369.5 288.6 371.4C284.8 373.3 281.9 375.2 278.5 373.6C275.1 372.0 268.8 365.6 268.4 362.0C268.0 358.4 272.9 352.1 276.0 351.9C279.1 351.7 285.4 357.3 287.3 360.8C289.2 364.3 288.6 368.8 287.5 373.0C286.4 377.2 285.0 379.6 281.0 386.0C277.0 392.4 270.5 403.4 263.3 411.4C256.1 419.4 245.9 428.3 238.0 434.2C230.1 440.1 222.3 443.5 216.0 446.5C209.7 449.5 204.8 450.7 200.0 452.3C195.2 453.9 192.1 455.2 186.9 456.0C181.7 456.8 174.4 457.4 168.9 456.8C163.4 456.2 157.5 454.9 153.7 452.2C149.9 449.5 145.9 444.5 146.1 440.8C146.3 437.1 151.2 430.8 154.7 430.0C158.2 429.2 165.1 436.5 167.0 435.9C168.9 435.3 164.9 429.4 166.3 426.6C167.7 423.8 172.1 419.5 175.5 419.0C178.9 418.5 184.0 421.0 186.5 423.5C189.0 426.0 190.6 428.8 190.7 434.2C190.8 439.6 189.3 449.4 186.9 456.0C184.5 462.6 181.4 468.8 176.5 474.0C171.6 479.2 164.5 484.2 157.5 487.3C150.5 490.4 142.3 492.8 134.7 492.5C127.1 492.2 118.6 489.1 112.0 485.4C105.4 481.7 98.7 474.9 94.9 470.3C91.1 465.7 90.3 461.7 89.2 457.9C88.1 454.1 87.0 451.0 88.2 447.5C89.4 444.0 93.9 437.3 96.4 437.0C98.9 436.7 103.0 442.9 103.4 445.6C103.8 448.3 101.1 451.1 98.7 453.2C96.3 455.2 93.3 456.4 89.2 457.9C85.1 459.4 79.7 461.6 74.0 462.3C68.3 463.0 61.3 462.9 55.0 462.3C48.7 461.7 39.2 459.2 36.0 458.6" fill="none" stroke="#969696" stroke-width="3.400" stroke-linecap="round" stroke-linejoin="round"/>
<path d="M340.5 309.6C339.0 312.6 335.6 321.4 331.6 327.8C327.6 334.2 321.6 342.4 316.5 348.1C311.4 353.8 305.9 358.1 301.3 362.0C296.7 365.9 292.4 369.5 288.6 371.4C284.8 373.3 281.9 375.2 278.5 373.6C275.1 372.0 268.8 365.6 268.4 362.0C268.0 358.4 272.9 352.1 276.0 351.9C279.1 351.7 285.4 357.3 287.3 360.8C289.2 364.3 288.6 368.8 287.5 373.0C286.4 377.2 285.0 379.6 281.0 386.0C277.0 392.4 270.5 403.4 263.3 411.4C256.1 419.4 245.9 428.3 238.0 434.2C230.1 440.1 222.3 443.5 216.0 446.5C209.7 449.5 204.8 450.7 200.0 452.3C195.2 453.9 192.1 455.2 186.9 456.0C181.7 456.8 174.4 457.4 168.9 456.8C163.4 456.2 157.5 454.9 153.7 452.2C149.9 449.5 145.9 444.5 146.1 440.8C146.3 437.1 151.2 430.8 154.7 430.0C158.2 429.2 165.1 436.5 167.0 435.9C168.9 435.3 164.9 429.4 166.3 426.6C167.7 423.8 172.1 419.5 175.5 419.0C178.9 418.5 184.0 421.0 186.5 423.5C189.0 426.0 190.6 428.8 190.7 434.2C190.8 439.6 189.3 449.4 186.9 456.0C184.5 462.6 181.4 468.8 176.5 474.0C171.6 479.2 164.5 484.2 157.5 487.3C150.5 490.4 142.3 492.8 134.7 492.5C127.1 492.2 118.6 489.1 112.0 485.4C105.4 481.7 98.7 474.9 94.9 470.3C91.1 465.7 90.3 461.7 89.2 457.9C88.1 454.1 87.0 451.0 88.2 447.5C89.4 444.0 93.9 437.3 96.4 437.0C98.9 436.7 103.0 442.9 103.4 445.6C103.8 448.3 101.1 451.1 98.7 453.2C96.3 455.2 93.3 456.4 89.2 457.9C85.1 459.4 79.7 461.6 74.0 462.3C68.3 463.0 61.3 462.9 55.0 462.3C48.7 461.7 39.2 459.2 36.0 458.6" fill="none" stroke="#fff" stroke-width="1.800" stroke-linecap="round" stroke-linejoin="round"/>
<path d="M286.300 216.800Q384 181.500 483.500 152.300L332 251.500Q306 240 286.300 216.800z" fill="#c8c8c8" stroke="#6e6e6e" stroke-width="3.600" stroke-linejoin="round"/>
<path d="M332 251.500L484.500 151.500L350 263.500L349 307L345 310Q336 280 332 251.500z" fill="#c8c8c8" stroke="#6e6e6e" stroke-width="3.600" stroke-linejoin="round"/>
<path d="M350.500 265L375.600 286.700L347 309.500z" fill="#c8c8c8" stroke="#6e6e6e" stroke-width="3.600" stroke-linejoin="round"/>
<path d="M484.500 151.500Q462 200 436.500 260Q424 290 414 315L375.600 286.700L351.500 264.500z" fill="#c8c8c8" stroke="#6e6e6e" stroke-width="3.600" stroke-linejoin="round"/>
<path d="M286.300 216.800Q384 181.500 483.500 152.300L332 251.500Q306 240 286.300 216.800z" fill="none" stroke="#cdcdcd" stroke-width="1.700" stroke-linejoin="round"/>
<path d="M332 251.500L484.500 151.500L350 263.500L349 307L345 310Q336 280 332 251.500z" fill="none" stroke="#cdcdcd" stroke-width="1.700" stroke-linejoin="round"/>
<path d="M350.500 265L375.600 286.700L347 309.500z" fill="none" stroke="#cdcdcd" stroke-width="1.700" stroke-linejoin="round"/>
<path d="M484.500 151.500Q462 200 436.500 260Q424 290 414 315L375.600 286.700L351.500 264.500z" fill="none" stroke="#cdcdcd" stroke-width="1.700" stroke-linejoin="round"/>
<path d="M288.5 145.5L375 145.5M395 145.5L481.5 145.5M288.5 321.5L375 321.5M395 321.5L481.5 321.5M279.5 155.5L279.5 223.5M279.5 243.5L279.5 311.5M490.5 155.5L490.5 223.5M490.5 243.5L490.5 311.5" stroke="#8a8a8a" stroke-width="1" fill="none"/>
<rect x="277.0" y="143.0" width="5" height="5" fill="#fff" stroke="#777" stroke-width="1"/>
<rect x="382.5" y="143.0" width="5" height="5" fill="#fff" stroke="#777" stroke-width="1"/>
<rect x="488.0" y="143.0" width="5" height="5" fill="#fff" stroke="#777" stroke-width="1"/>
<rect x="277.0" y="231.0" width="5" height="5" fill="#fff" stroke="#777" stroke-width="1"/>
<rect x="488.0" y="231.0" width="5" height="5" fill="#fff" stroke="#777" stroke-width="1"/>
<rect x="277.0" y="319.0" width="5" height="5" fill="#fff" stroke="#777" stroke-width="1"/>
<rect x="382.5" y="319.0" width="5" height="5" fill="#fff" stroke="#777" stroke-width="1"/>
<rect x="488.0" y="319.0" width="5" height="5" fill="#fff" stroke="#777" stroke-width="1"/>
<path d="M385 130.500V140" stroke="#8a8a8a" stroke-width="1"/>
<circle cx="385" cy="119.700" r="3.200" fill="#22e022" stroke="#1a8a1a" stroke-width="1"/>
<path d="M270.500 151.500V205M270.500 260V316M265.500 151.500h11M265.500 316h11" stroke="#8a8a8a" stroke-width="1" fill="none"/>
<path d="M270.500 151.500L273.700 157.500L267.300 157.500zM270.500 316L273.700 309.700L267.300 309.700z" fill="#fff" stroke="#8a8a8a" stroke-width="1"/>
<text transform="translate(274.200 233.500) rotate(-90)" font-size="10.300" text-anchor="middle" fill="#8c8c8c" textLength="46" lengthAdjust="spacingAndGlyphs">82,53 mm</text>
<path d="M285 330.500H357M413 330.500H485M284.500 324.500v10.500M485.500 324.500v10.500" stroke="#8a8a8a" stroke-width="1" fill="none"/>
<path d="M285 330.500L291.200 327.200L291.200 333.800zM485 330.500L478.800 327.200L478.800 333.800z" fill="#fff" stroke="#8a8a8a" stroke-width="1"/>
<text x="385" y="334.200" font-size="10.300" text-anchor="middle" fill="#8c8c8c" textLength="49.500" lengthAdjust="spacingAndGlyphs">100,07 mm</text>
</g></svg>
<div class="abs" style="left:710px;top:69px;width:13px;height:12px;background:#1fb1da"></div>
<svg style="left:710px;top:69px" width="13" height="12" viewBox="0 0 13 12"><path d="M3 3l3 3-3 3M7 3l3 3-3 3" fill="none" stroke="#fff" stroke-width="1.6"/></svg>
<div class="abs" style="left:709px;top:85px;width:14px;height:499px;background:#efefef;border-left:1px solid #6cc4e0;border-right:1px solid #a6dcee;border-bottom:1px solid #6cc4e0"></div>
<div class="abs" style="left:710px;top:85px;width:12px;height:12px;background:#1fb1da"></div>
<svg style="left:710px;top:85px" width="12" height="12" viewBox="0 0 12 12"><path d="M6 2.500L10.500 10H1.500z" fill="#fff"/></svg>
<div class="abs" style="left:709px;top:309px;width:13px;height:49px;background:#1fb1da"></div>
<div class="abs" style="left:710px;top:571px;width:12px;height:12px;background:#1fb1da"></div>
<svg style="left:710px;top:571px" width="12" height="12" viewBox="0 0 12 12"><path d="M6 10L10.500 2.500H1.500z" fill="#fff"/></svg>
<div class="abs" style="left:37px;top:583px;width:673px;height:12px;background:#efefef;border-top:1px solid #58bad9"></div>
<div class="abs" style="left:37px;top:583px;width:12px;height:12px;background:#1fb1da"></div>
<svg style="left:37px;top:583px" width="12" height="12" viewBox="0 0 12 12"><path d="M2 6L9.500 1.500V10.500z" fill="#fff"/></svg>
<div class="abs" style="left:364px;top:584px;width:83px;height:11px;background:#1fb1da"></div>
<div class="abs" style="left:698px;top:583px;width:12px;height:12px;background:#1fb1da"></div>
<svg style="left:698px;top:583px" width="12" height="12" viewBox="0 0 12 12"><path d="M10 6L2.500 1.500V10.500z" fill="#fff"/></svg>
<svg style="left:0;top:0" width="1024" height="632" viewBox="0 0 1024 632" font-family="Liberation Sans,sans-serif">
<path d="M154.500 583.500L161.500 566.500q1-2 3-2H272q2 0 3 2L282.500 583.500z" fill="#fff" stroke="#58bad9" stroke-width="1"/>
<path d="M37 583.500L46 566q1.200-2.500 4-2.500H148q2.500 0 3.500 2.500L158.500 583.500z" fill="#1fb1da"/>
<text x="49" y="577.400" font-size="10.500" fill="#fff" textLength="87" lengthAdjust="spacingAndGlyphs">Unbenannt-1.studio3</text>
<circle cx="145.500" cy="572" r="5.200" fill="#fff"/>
<text x="145.500" y="575" font-size="8.500" font-weight="bold" text-anchor="middle" fill="#1fb1da">x</text>
<text x="165" y="577.400" font-size="10.500" fill="#444" textLength="92" lengthAdjust="spacingAndGlyphs">19143-NS8VW2.studi...</text>
<circle cx="267.500" cy="572.500" r="5.200" fill="#fff" stroke="#e4e4e4" stroke-width="1"/>
<text x="267.500" y="575" font-size="8.500" font-weight="bold" text-anchor="middle" fill="#1fb1da">x</text>
</svg>
<div class="abs" style="left:727px;top:69px;width:286px;height:527px;border:1px solid #58bad9;background:#fff"></div>
<div class="abs" id="ptitle" style="left:736px;top:78px;font-size:12.500px;line-height:15px;color:#111;white-space:nowrap;transform-origin:0 50%;transform:scaleX(.9)">FÜLLFARBE</div>
<div class="abs" style="left:735px;top:92px;width:270px;height:1px;background:#7a7a7a"></div>
<div class="abs" style="left:735px;top:95px;width:270px;height:1px;background:#58bad9"></div>
<div class="abs" style="left:741px;top:110px;width:245px;height:471px;border:1px solid #74c4e0;background:#fff"></div>
<div class="abs" style="left:742px;top:111px;width:243px;height:21px;background:#dcdcdc"></div>
<div class="abs" style="left:742px;top:250px;width:243px;height:21px;background:#dcdcdc"></div>
<div class="abs" style="left:746px;top:135px;width:236px;height:110px;border:1px solid #74c4e0;background:#fff"></div>
<svg style="left:0;top:0" width="1024" height="632" viewBox="0 0 1024 632" font-family="Liberation Sans,sans-serif">
<defs><pattern id="xh" width="4.950" height="4.950" patternUnits="userSpaceOnUse" patternTransform="translate(868 141.500) rotate(45)"><path d="M0 .5H4.950M.5 0V4.950" stroke="#b2b2b2" stroke-width="1"/></pattern></defs>
<circle cx="753.700" cy="120.800" r="6.500" fill="#d6d6d6" stroke="#8e8e8e" stroke-width="1"/><path d="M749.800 118.300h7.800l-3.900 6z" fill="#7a7a7a"/>
<circle cx="753.700" cy="260" r="6.500" fill="#d6d6d6" stroke="#8e8e8e" stroke-width="1"/><path d="M751.300 256.200v7.800l6-3.900z" fill="#7a7a7a"/>
<text x="766.500" y="124" font-size="10.500" font-weight="bold" fill="#7c7c7c" textLength="66" lengthAdjust="spacingAndGlyphs">Grundoptionen</text>
<text x="766.500" y="263.500" font-size="10.500" font-weight="bold" fill="#7c7c7c" textLength="90" lengthAdjust="spacingAndGlyphs">Erweiterte Optionen</text>
<rect x="752.80" y="141.90" width="11.20" height="11.20" rx="2.800" fill="#ffffff" stroke="#6a6a6a" stroke-width="1"/>
<rect x="766.98" y="141.90" width="11.20" height="11.20" rx="2.800" fill="#ebebeb" stroke="#6a6a6a" stroke-width="1"/>
<rect x="781.16" y="141.90" width="11.20" height="11.20" rx="2.800" fill="#dcdcdc" stroke="#6a6a6a" stroke-width="1"/>
<rect x="794.54" y="141.10" width="12.80" height="12.80" rx="3" fill="#cbcbcb" stroke="#3c3c3c" stroke-width="2"/>
<rect x="809.52" y="141.90" width="11.20" height="11.20" rx="2.800" fill="#b9b9b9" stroke="#6a6a6a" stroke-width="1"/>
<rect x="823.70" y="141.90" width="11.20" height="11.20" rx="2.800" fill="#a8a8a8" stroke="#6a6a6a" stroke-width="1"/>
<rect x="837.88" y="141.90" width="11.20" height="11.20" rx="2.800" fill="#969696" stroke="#6a6a6a" stroke-width="1"/>
<rect x="852.06" y="141.90" width="11.20" height="11.20" rx="2.800" fill="#858585" stroke="#6a6a6a" stroke-width="1"/>
<rect x="752.80" y="156.50" width="11.20" height="11.20" rx="2.800" fill="#737373" stroke="#6a6a6a" stroke-width="1"/>
<rect x="766.98" y="156.50" width="11.20" height="11.20" rx="2.800" fill="#626262" stroke="#6a6a6a" stroke-width="1"/>
<rect x="781.16" y="156.50" width="11.20" height="11.20" rx="2.800" fill="#515151" stroke="#6a6a6a" stroke-width="1"/>
<rect x="795.34" y="156.50" width="11.20" height="11.20" rx="2.800" fill="#404040" stroke="#6a6a6a" stroke-width="1"/>
<rect x="809.52" y="156.50" width="11.20" height="11.20" rx="2.800" fill="#2f2f2f" stroke="#6a6a6a" stroke-width="1"/>
<rect x="823.70" y="156.50" width="11.20" height="11.20" rx="2.800" fill="#1e1e1e" stroke="#6a6a6a" stroke-width="1"/>
<rect x="837.88" y="156.50" width="11.20" height="11.20" rx="2.800" fill="#0f0f0f" stroke="#6a6a6a" stroke-width="1"/>
<rect x="852.06" y="156.50" width="11.20" height="11.20" rx="2.800" fill="#000000" stroke="#6a6a6a" stroke-width="1"/>
<rect x="752.80" y="171.90" width="11.20" height="11.20" rx="2.800" fill="#f00000" stroke="#6f6f6f" stroke-width="1"/>
<rect x="766.98" y="171.90" width="11.20" height="11.20" rx="2.800" fill="#784428" stroke="#6f6f6f" stroke-width="1"/>
<rect x="781.16" y="171.90" width="11.20" height="11.20" rx="2.800" fill="#f06000" stroke="#6f6f6f" stroke-width="1"/>
<rect x="795.34" y="171.90" width="11.20" height="11.20" rx="2.800" fill="#ffa500" stroke="#6f6f6f" stroke-width="1"/>
<rect x="809.52" y="171.90" width="11.20" height="11.20" rx="2.800" fill="#b4a800" stroke="#6f6f6f" stroke-width="1"/>
<rect x="823.70" y="171.90" width="11.20" height="11.20" rx="2.800" fill="#8cb800" stroke="#6f6f6f" stroke-width="1"/>
<rect x="837.88" y="171.90" width="11.20" height="11.20" rx="2.800" fill="#32c000" stroke="#6f6f6f" stroke-width="1"/>
<rect x="852.06" y="171.90" width="11.20" height="11.20" rx="2.800" fill="#00e08a" stroke="#6f6f6f" stroke-width="1"/>
<rect x="866.24" y="171.90" width="11.20" height="11.20" rx="2.800" fill="#00e0b4" stroke="#6f6f6f" stroke-width="1"/>
<rect x="880.42" y="171.90" width="11.20" height="11.20" rx="2.800" fill="#00c8f5" stroke="#6f6f6f" stroke-width="1"/>
<rect x="894.60" y="171.90" width="11.20" height="11.20" rx="2.800" fill="#0a6cf5" stroke="#6f6f6f" stroke-width="1"/>
<rect x="908.78" y="171.90" width="11.20" height="11.20" rx="2.800" fill="#0a0af5" stroke="#6f6f6f" stroke-width="1"/>
<rect x="922.96" y="171.90" width="11.20" height="11.20" rx="2.800" fill="#6a14f0" stroke="#6f6f6f" stroke-width="1"/>
<rect x="937.14" y="171.90" width="11.20" height="11.20" rx="2.800" fill="#c818f0" stroke="#6f6f6f" stroke-width="1"/>
<rect x="951.32" y="171.90" width="11.20" height="11.20" rx="2.800" fill="#f81ed2" stroke="#6f6f6f" stroke-width="1"/>
<rect x="965.50" y="171.90" width="11.20" height="11.20" rx="2.800" fill="#f81e78" stroke="#6f6f6f" stroke-width="1"/>
<rect x="752.80" y="186.00" width="11.20" height="11.20" rx="2.800" fill="#ff2a2a" stroke="#6f6f6f" stroke-width="1"/>
<rect x="766.98" y="186.00" width="11.20" height="11.20" rx="2.800" fill="#8c5a3a" stroke="#6f6f6f" stroke-width="1"/>
<rect x="781.16" y="186.00" width="11.20" height="11.20" rx="2.800" fill="#ff7a14" stroke="#6f6f6f" stroke-width="1"/>
<rect x="795.34" y="186.00" width="11.20" height="11.20" rx="2.800" fill="#ffb832" stroke="#6f6f6f" stroke-width="1"/>
<rect x="809.52" y="186.00" width="11.20" height="11.20" rx="2.800" fill="#c8bc00" stroke="#6f6f6f" stroke-width="1"/>
<rect x="823.70" y="186.00" width="11.20" height="11.20" rx="2.800" fill="#96c800" stroke="#6f6f6f" stroke-width="1"/>
<rect x="837.88" y="186.00" width="11.20" height="11.20" rx="2.800" fill="#3cd200" stroke="#6f6f6f" stroke-width="1"/>
<rect x="852.06" y="186.00" width="11.20" height="11.20" rx="2.800" fill="#22f5a0" stroke="#6f6f6f" stroke-width="1"/>
<rect x="866.24" y="186.00" width="11.20" height="11.20" rx="2.800" fill="#32f5d0" stroke="#6f6f6f" stroke-width="1"/>
<rect x="880.42" y="186.00" width="11.20" height="11.20" rx="2.800" fill="#28c8f5" stroke="#6f6f6f" stroke-width="1"/>
<rect x="894.60" y="186.00" width="11.20" height="11.20" rx="2.800" fill="#3c8cf8" stroke="#6f6f6f" stroke-width="1"/>
<rect x="908.78" y="186.00" width="11.20" height="11.20" rx="2.800" fill="#3c3cf8" stroke="#6f6f6f" stroke-width="1"/>
<rect x="922.96" y="186.00" width="11.20" height="11.20" rx="2.800" fill="#8c3cf8" stroke="#6f6f6f" stroke-width="1"/>
<rect x="937.14" y="186.00" width="11.20" height="11.20" rx="2.800" fill="#d846f5" stroke="#6f6f6f" stroke-width="1"/>
<rect x="951.32" y="186.00" width="11.20" height="11.20" rx="2.800" fill="#fa46d8" stroke="#6f6f6f" stroke-width="1"/>
<rect x="965.50" y="186.00" width="11.20" height="11.20" rx="2.800" fill="#fa4690" stroke="#6f6f6f" stroke-width="1"/>
<rect x="752.80" y="200.10" width="11.20" height="11.20" rx="2.800" fill="#ff6464" stroke="#6f6f6f" stroke-width="1"/>
<rect x="766.98" y="200.10" width="11.20" height="11.20" rx="2.800" fill="#c89a6e" stroke="#6f6f6f" stroke-width="1"/>
<rect x="781.16" y="200.10" width="11.20" height="11.20" rx="2.800" fill="#ff8c3c" stroke="#6f6f6f" stroke-width="1"/>
<rect x="795.34" y="200.10" width="11.20" height="11.20" rx="2.800" fill="#ffc864" stroke="#6f6f6f" stroke-width="1"/>
<rect x="809.52" y="200.10" width="11.20" height="11.20" rx="2.800" fill="#e0d000" stroke="#6f6f6f" stroke-width="1"/>
<rect x="823.70" y="200.10" width="11.20" height="11.20" rx="2.800" fill="#a0d800" stroke="#6f6f6f" stroke-width="1"/>
<rect x="837.88" y="200.10" width="11.20" height="11.20" rx="2.800" fill="#46e000" stroke="#6f6f6f" stroke-width="1"/>
<rect x="852.06" y="200.10" width="11.20" height="11.20" rx="2.800" fill="#64f5b8" stroke="#6f6f6f" stroke-width="1"/>
<rect x="866.24" y="200.10" width="11.20" height="11.20" rx="2.800" fill="#6ef5dc" stroke="#6f6f6f" stroke-width="1"/>
<rect x="880.42" y="200.10" width="11.20" height="11.20" rx="2.800" fill="#50d2f8" stroke="#6f6f6f" stroke-width="1"/>
<rect x="894.60" y="200.10" width="11.20" height="11.20" rx="2.800" fill="#6ea8fa" stroke="#6f6f6f" stroke-width="1"/>
<rect x="908.78" y="200.10" width="11.20" height="11.20" rx="2.800" fill="#6e6efa" stroke="#6f6f6f" stroke-width="1"/>
<rect x="922.96" y="200.10" width="11.20" height="11.20" rx="2.800" fill="#aa6efa" stroke="#6f6f6f" stroke-width="1"/>
<rect x="937.14" y="200.10" width="11.20" height="11.20" rx="2.800" fill="#e478f8" stroke="#6f6f6f" stroke-width="1"/>
<rect x="951.32" y="200.10" width="11.20" height="11.20" rx="2.800" fill="#fc78e0" stroke="#6f6f6f" stroke-width="1"/>
<rect x="965.50" y="200.10" width="11.20" height="11.20" rx="2.800" fill="#fc6ea6" stroke="#6f6f6f" stroke-width="1"/>
<rect x="752.80" y="214.30" width="11.20" height="11.20" rx="2.800" fill="#ff9a9a" stroke="#6f6f6f" stroke-width="1"/>
<rect x="766.98" y="214.30" width="11.20" height="11.20" rx="2.800" fill="#d8b890" stroke="#6f6f6f" stroke-width="1"/>
<rect x="781.16" y="214.30" width="11.20" height="11.20" rx="2.800" fill="#ffa060" stroke="#6f6f6f" stroke-width="1"/>
<rect x="795.34" y="214.30" width="11.20" height="11.20" rx="2.800" fill="#ffdc96" stroke="#6f6f6f" stroke-width="1"/>
<rect x="809.52" y="214.30" width="11.20" height="11.20" rx="2.800" fill="#f0e400" stroke="#6f6f6f" stroke-width="1"/>
<rect x="823.70" y="214.30" width="11.20" height="11.20" rx="2.800" fill="#a8e400" stroke="#6f6f6f" stroke-width="1"/>
<rect x="837.88" y="214.30" width="11.20" height="11.20" rx="2.800" fill="#4cf000" stroke="#6f6f6f" stroke-width="1"/>
<rect x="852.06" y="214.30" width="11.20" height="11.20" rx="2.800" fill="#a0f8d4" stroke="#6f6f6f" stroke-width="1"/>
<rect x="866.24" y="214.30" width="11.20" height="11.20" rx="2.800" fill="#b4faec" stroke="#6f6f6f" stroke-width="1"/>
<rect x="880.42" y="214.30" width="11.20" height="11.20" rx="2.800" fill="#78dcf8" stroke="#6f6f6f" stroke-width="1"/>
<rect x="894.60" y="214.30" width="11.20" height="11.20" rx="2.800" fill="#a0c8fc" stroke="#6f6f6f" stroke-width="1"/>
<rect x="908.78" y="214.30" width="11.20" height="11.20" rx="2.800" fill="#a0a0fc" stroke="#6f6f6f" stroke-width="1"/>
<rect x="922.96" y="214.30" width="11.20" height="11.20" rx="2.800" fill="#c8a0fc" stroke="#6f6f6f" stroke-width="1"/>
<rect x="937.14" y="214.30" width="11.20" height="11.20" rx="2.800" fill="#eeaafa" stroke="#6f6f6f" stroke-width="1"/>
<rect x="951.32" y="214.30" width="11.20" height="11.20" rx="2.800" fill="#fdaaea" stroke="#6f6f6f" stroke-width="1"/>
<rect x="965.50" y="214.30" width="11.20" height="11.20" rx="2.800" fill="#fc96bc" stroke="#6f6f6f" stroke-width="1"/>
<rect x="752.80" y="228.50" width="11.20" height="11.20" rx="2.800" fill="#ffcdcd" stroke="#6f6f6f" stroke-width="1"/>
<rect x="766.98" y="228.50" width="11.20" height="11.20" rx="2.800" fill="#e8d4b8" stroke="#6f6f6f" stroke-width="1"/>
<rect x="781.16" y="228.50" width="11.20" height="11.20" rx="2.800" fill="#ffb080" stroke="#6f6f6f" stroke-width="1"/>
<rect x="795.34" y="228.50" width="11.20" height="11.20" rx="2.800" fill="#ffeccc" stroke="#6f6f6f" stroke-width="1"/>
<rect x="809.52" y="228.50" width="11.20" height="11.20" rx="2.800" fill="#ffff00" stroke="#6f6f6f" stroke-width="1"/>
<rect x="823.70" y="228.50" width="11.20" height="11.20" rx="2.800" fill="#b0f000" stroke="#6f6f6f" stroke-width="1"/>
<rect x="837.88" y="228.50" width="11.20" height="11.20" rx="2.800" fill="#50ff10" stroke="#6f6f6f" stroke-width="1"/>
<rect x="852.06" y="228.50" width="11.20" height="11.20" rx="2.800" fill="#dcfcee" stroke="#6f6f6f" stroke-width="1"/>
<rect x="866.24" y="228.50" width="11.20" height="11.20" rx="2.800" fill="#e8fdf6" stroke="#6f6f6f" stroke-width="1"/>
<rect x="880.42" y="228.50" width="11.20" height="11.20" rx="2.800" fill="#a0e8fa" stroke="#6f6f6f" stroke-width="1"/>
<rect x="894.60" y="228.50" width="11.20" height="11.20" rx="2.800" fill="#d8e8fe" stroke="#6f6f6f" stroke-width="1"/>
<rect x="908.78" y="228.50" width="11.20" height="11.20" rx="2.800" fill="#d0d0fe" stroke="#6f6f6f" stroke-width="1"/>
<rect x="922.96" y="228.50" width="11.20" height="11.20" rx="2.800" fill="#e6d8fe" stroke="#6f6f6f" stroke-width="1"/>
<rect x="937.14" y="228.50" width="11.20" height="11.20" rx="2.800" fill="#f8dcfd" stroke="#6f6f6f" stroke-width="1"/>
<rect x="951.32" y="228.50" width="11.20" height="11.20" rx="2.800" fill="#fedcf4" stroke="#6f6f6f" stroke-width="1"/>
<rect x="965.50" y="228.50" width="11.20" height="11.20" rx="2.800" fill="#fdb4d2" stroke="#6f6f6f" stroke-width="1"/>
<rect x="866.200" y="141.900" width="25.300" height="25.300" rx="5" fill="#fff" stroke="#787878" stroke-width="1.150"/><rect x="866.200" y="141.900" width="25.300" height="25.300" rx="5" fill="url(#xh)"/>
<rect x="894.600" y="141.900" width="25.300" height="25.300" rx="5" fill="#fff" stroke="#787878" stroke-width="1.150"/>
<path d="M899.800 162.300L908 153.500" stroke="#808080" stroke-width="3.300" stroke-linecap="round"/><ellipse cx="910.600" cy="150.400" rx="4.800" ry="3.500" transform="rotate(-47 910.600 150.400)" fill="#d6d6d6" stroke="#808080" stroke-width="1"/><path d="M899.800 162.300L908.500 153" stroke="#d6d6d6" stroke-width="1.500" stroke-linecap="round"/>
<rect x="923.100" y="141.900" width="53.400" height="25.300" rx="5" fill="#fff" stroke="#787878" stroke-width="1.150"/>
</svg>
<div class="abs" id="blog" style="left:833px;top:598px;font-family:'Liberation Serif','DejaVu Serif',serif;font-style:italic;font-weight:bold;font-size:19px;line-height:22px;color:#111;white-space:nowrap;transform-origin:0 50%">BlogOhneNamen</div>
<svg style="left:976px;top:601px" width="38" height="18" viewBox="0 0 38 18">
<g transform="translate(8.500 9)"><circle r="3.600" fill="none" stroke="#1fb1da" stroke-width="2.600"/><g stroke="#1fb1da" stroke-width="2.600"><path d="M0-6.800V-4M0 6.800V4M-6.800 0H-4M6.800 0H4M-4.800-4.800L-3-3M4.800 4.800L3 3M-4.800 4.800L-3 3M4.800-4.800L3-3"/></g></g>
<g transform="translate(27.500 9)" fill="none" stroke-width="2.400"><path d="M-5.500 1.500A5.700 5.700 0 0 1 1.500-5.500" stroke="#1fb1da"/><path d="M5.500-1.500A5.700 5.700 0 0 1-1.500 5.500" stroke="#1fb1da"/><path d="M3-5A5.700 5.700 0 0 1 5.600-.5" stroke="#9adcf0"/><path d="M-3 5A5.700 5.700 0 0 1-5.600 .5" stroke="#9adcf0"/></g>
</svg>
</body></html>
